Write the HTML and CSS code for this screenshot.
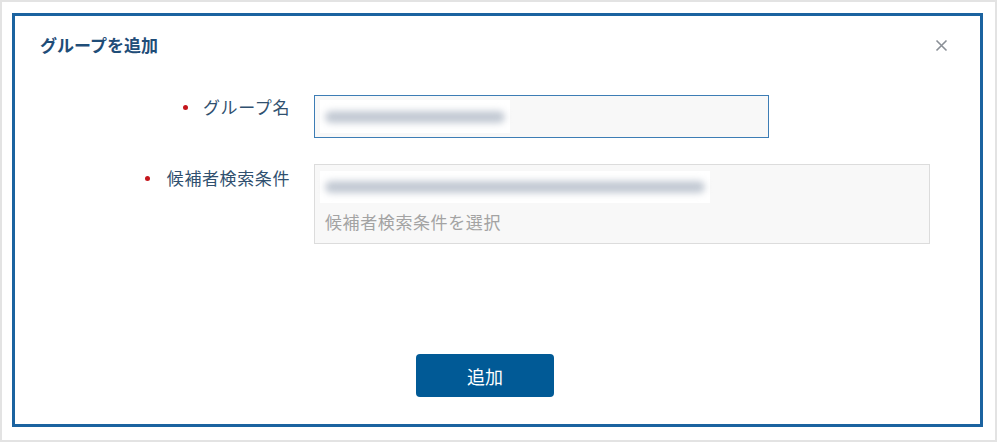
FILE: index.html
```html
<!DOCTYPE html>
<html lang="ja">
<head>
<meta charset="utf-8">
<link rel="stylesheet" href="styles.css">
</head>
<body>
<div class="frame">
  <div class="dialog">
    <div class="header">
      <div class="title">グループを追加</div>
      <div class="close">
        <svg width="13" height="13" viewBox="0 0 13 13"><path d="M1.5 1.5 L11.5 11.5 M11.5 1.5 L1.5 11.5" stroke="#8a8f96" stroke-width="1.6" fill="none"/></svg>
      </div>
    </div>
    <div class="form">
      <div class="row">
        <div class="label"><span class="dot"></span>グループ名</div>
        <div class="input input-name">
          <div class="blurbox w190"><div class="blurbar"></div></div>
        </div>
      </div>
      <div class="row row2">
        <div class="label"><span class="dot"></span>候補者検索条件</div>
        <div class="input input-cond">
          <div class="blurbox w390"><div class="blurbar"></div></div>
          <div class="placeholder">候補者検索条件を選択</div>
        </div>
      </div>
    </div>
    <div class="footer">
      <button class="btn">追加</button>
    </div>
  </div>
</div>
</body>
</html>
```
FILE: styles.css
```css
* { box-sizing: border-box; }
html, body { margin: 0; padding: 0; background: #fff; }
body {
  font-family: "Noto Sans CJK JP", "Noto Sans", sans-serif;
  width: 997px;
  height: 442px;
}
.frame {
  width: 997px;
  height: 442px;
  border: 2px solid #e3e3e3;
  padding: 11px 12px 13px 10px;
}
.dialog {
  height: 100%;
  border: 3px solid #1b63a0;
  display: flex;
  flex-direction: column;
}
.header {
  display: flex;
  justify-content: space-between;
  align-items: center;
  padding: 17px 32px 0 25px;
}
.title {
  font-size: 17px;
  line-height: 24px;
  font-weight: bold;
  color: #1f4d78;
}
.close {
  width: 13px;
  height: 13px;
  display: flex;
}
.form {
  margin-top: 38px;
  display: flex;
  flex-direction: column;
  gap: 26px;
}
.row {
  display: grid;
  grid-template-columns: 275px auto;
  column-gap: 24px;
  align-items: start;
}
.label {
  display: flex;
  align-items: center;
  justify-content: flex-end;
  font-size: 17px;
  line-height: 24px;
  color: #30506f;
  letter-spacing: 0.6px;
}
.row2 .label { padding-top: 2px; }
.dot {
  width: 5px;
  height: 5px;
  border-radius: 50%;
  background: #c4161c;
  margin-right: 15px;
}
.row2 .dot { margin-right: 17px; }
.input {
  background: #f8f8f8;
}
.input-name {
  width: 455px;
  height: 43px;
  border: 1px solid #3d7db5;
  padding: 4px 5px;
}
.input-cond {
  width: 616px;
  height: 80px;
  border: 1px solid #dcdcdc;
  padding: 6px 5px;
}
.blurbox {
  background: #fff;
  height: 33px;
  display: flex;
  align-items: center;
  padding: 0 5px;
}
.w190 { width: 190px; }
.w390 { width: 390px; height: 32px; }
.blurbar {
  width: 100%;
  height: 12px;
  background: #c2c9d3;
  border-radius: 6px;
  filter: blur(3.5px);
}
.placeholder {
  margin-top: 7px;
  padding-left: 5px;
  font-size: 17px;
  line-height: 24px;
  color: #a3a3a3;
  letter-spacing: 0.6px;
}
.footer {
  margin-top: 110px;
  padding-left: 401px;
}
.btn {
  width: 138px;
  height: 43px;
  border: none;
  border-radius: 4px;
  background: #015a96;
  color: #fff;
  font-family: "Noto Sans CJK JP", "Noto Sans", sans-serif;
  font-size: 18px;
  padding: 0;
}
```
